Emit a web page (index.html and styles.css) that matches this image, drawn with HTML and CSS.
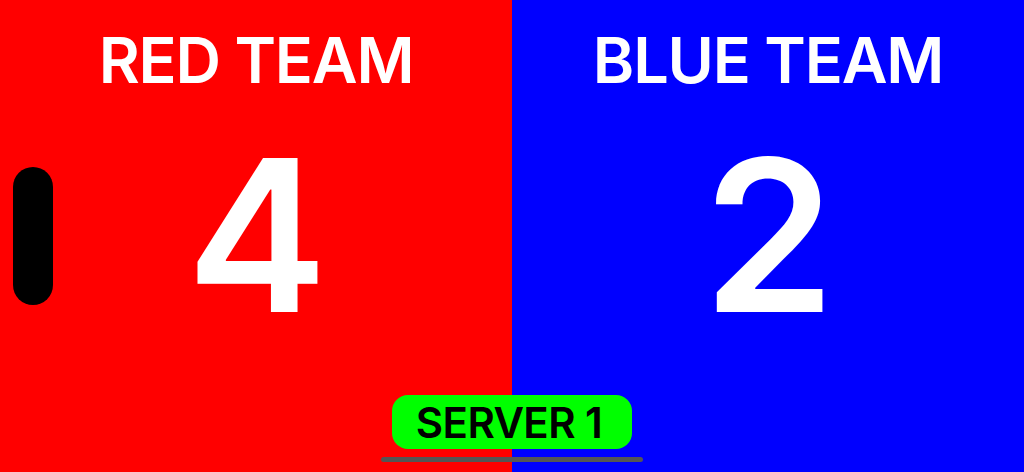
FILE: index.html
```html
<html lang="en">
<head>
    <meta charset="UTF-8">
    <meta name="viewport" content="width=device-width, initial-scale=1.0">
    <title>Scoreboard</title>
    <link rel="stylesheet" href="styles.css">
</head>
<body>
    <div class="board">
        <div class="team red">
            <h1 class="team-name">RED TEAM</h1>
            <div class="score">4</div>
            <!-- serving side marker -->
            <div class="serve-marker"></div>
        </div>
        <div class="team blue">
            <h1 class="team-name">BLUE TEAM</h1>
            <div class="score">2</div>
        </div>
        <div class="server-badge">SERVER 1</div>
        <div class="home-bar"></div>
    </div>
</body>
</html>
```

FILE: styles.css
```css
body { margin: 0; padding: 0; font-family: Inter, "Noto Sans", sans-serif; background-color: #000; overflow: hidden; }
.board { position: relative; display: flex; width: 1024px; height: 472px; }
.team { position: relative; flex: 1; display: flex; flex-direction: column; align-items: center; color: #fff; }
.red { background-color: #ff0000; }
.blue { background-color: #0000ff; }
.team-name { margin: 0; padding-top: 29px; font-size: 63px; font-weight: 600; line-height: 1; letter-spacing: -1.2px; }
.score { margin-top: 37px; font-size: 212px; font-weight: 600; line-height: 1; letter-spacing: -2px; }
.serve-marker { position: absolute; left: 13px; top: 167px; width: 40px; height: 138px; border-radius: 20px; background-color: #000; }
.server-badge { position: absolute; left: 392px; top: 395px; width: 240px; height: 54px; box-sizing: border-box; padding-right: 6px; border-radius: 16px; background-color: #00ff00; color: #000; font-size: 42px; font-weight: 600; display: flex; align-items: center; justify-content: center; letter-spacing: -0.6px; }
.home-bar { position: absolute; left: 381px; top: 457px; width: 262px; height: 5px; border-radius: 3px; background-color: #555; }
```
